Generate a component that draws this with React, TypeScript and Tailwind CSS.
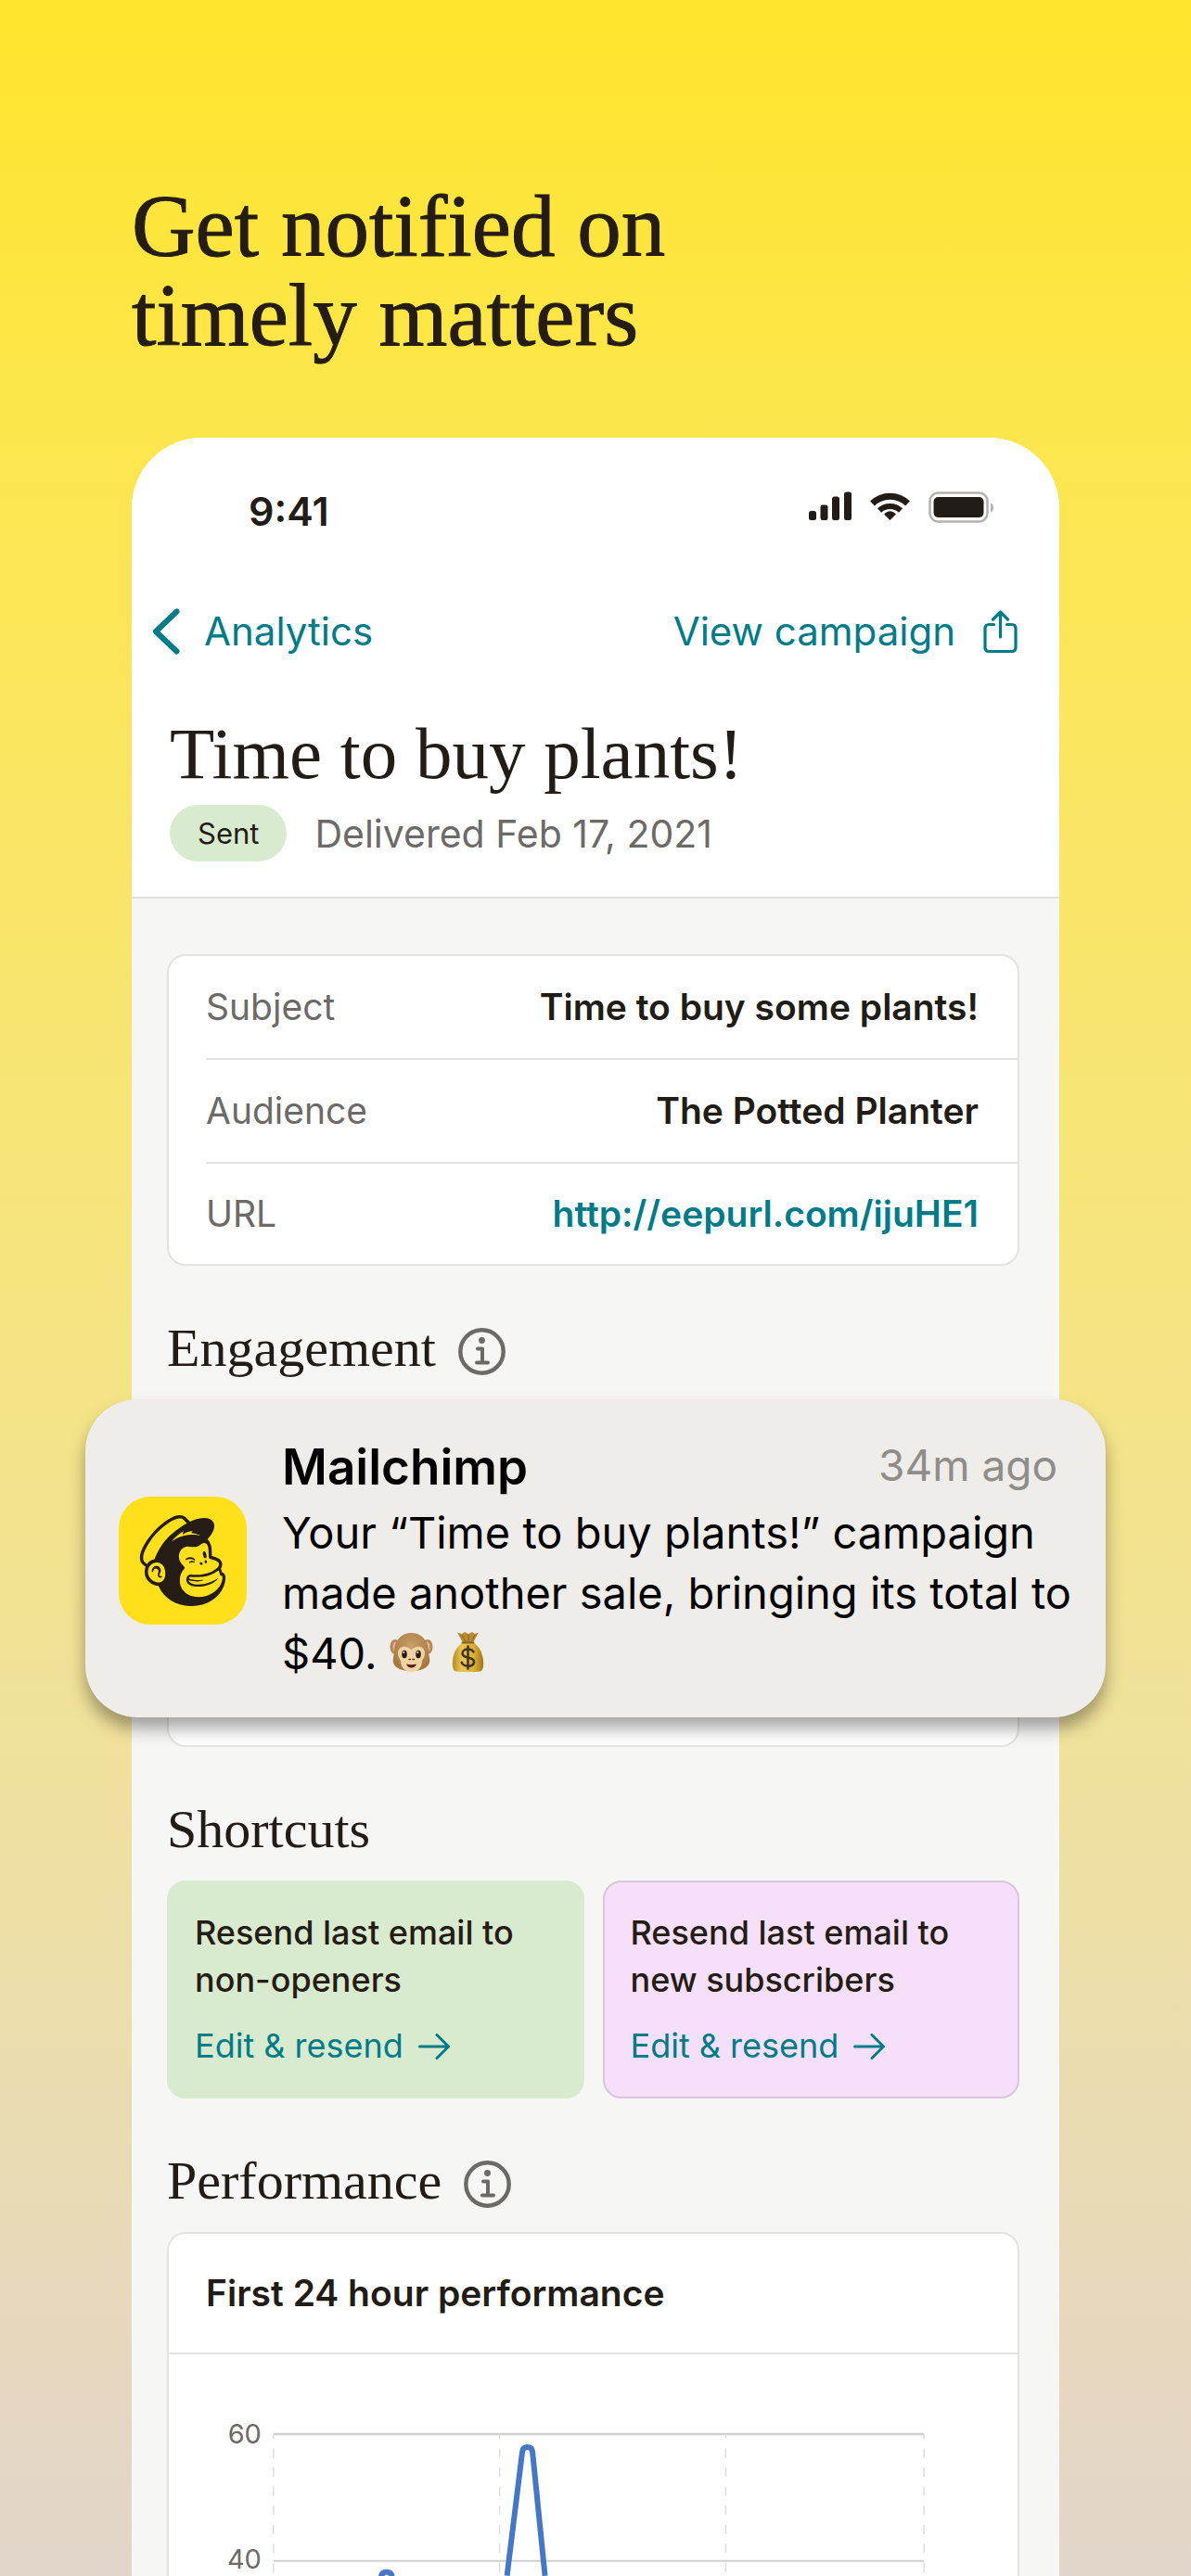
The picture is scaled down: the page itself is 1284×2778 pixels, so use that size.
import type { ReactNode } from 'react';
import { SiMailchimp } from 'react-icons/si';

const details = [
  { label: 'Subject', value: 'Time to buy some plants!' },
  { label: 'Audience', value: 'The Potted Planter' },
  { label: 'URL', value: 'http://eepurl.com/ijuHE1', href: '#url' },
];

const shortcuts = [
  { id: 'non-openers', title: 'Resend last email to non-openers', color: 'bg-[#d9ebcf] border-[#d9ebcf]' },
  { id: 'new-subscribers', title: 'Resend last email to new subscribers', color: 'bg-[#f6e0f9] border-[#d9c5dc]' },
];

function StatusIcons() {
  return (
    <svg width="200" height="40" viewBox="0 0 200 40" aria-hidden="true">
      <g fill="#211c15">
        <rect x="0" y="24" width="8" height="10" rx="2.5" />
        <rect x="12.5" y="17.5" width="8" height="16.5" rx="2.5" />
        <rect x="25" y="8.5" width="8" height="25.5" rx="2.5" />
        <rect x="38" y="3.5" width="8" height="30.5" rx="2.5" />
        <path d="M87.5 34 81 27.5Q87.5 21 94 27.5Z" />
        <rect x="134.5" y="9" width="54" height="22" rx="5" />
      </g>
      <g fill="none" stroke="#211c15">
        <path d="M68.5 16A27 27 0 0 1 106.5 16" strokeWidth="7" />
        <path d="M76 23.5A17 17 0 0 1 99 23.500" strokeWidth="6" />
      </g>
      <rect x="130.5" y="4.5" width="62" height="31" rx="9" fill="none" stroke="#b3b0ad" strokeWidth="2.5" />
      <path d="M196 15.5q3 1.5 3 5t-3 5z" fill="#b3b0ad" />
    </svg>
  );
}

function ChevronIcon() {
  return (
    <svg width="30" height="50" viewBox="0 0 30 50" fill="none" stroke="#007c89" strokeWidth="6" strokeLinecap="round" strokeLinejoin="round" aria-hidden="true">
      <path d="M26.5 3.5 4 25l22.5 21.5" />
    </svg>
  );
}

function ShareIcon() {
  return (
    <svg width="37" height="46" viewBox="0 0 37 46" fill="none" stroke="#007c89" strokeWidth="3.2" strokeLinecap="round" strokeLinejoin="round" aria-hidden="true">
      <path d="M11.5 15.500H6a4 4 0 0 0-4 4V40.500a4 4 0 0 0 4 4H31a4 4 0 0 0 4-4V19.500a4 4 0 0 0-4-4H25.500" />
      <path d="M18.5 29V2.500M10.500 10l8-8 8 8" />
    </svg>
  );
}

function InfoIcon() {
  return (
    <svg width="51" height="53" viewBox="0 0 51 53" fill="none" stroke="#6b6a67" aria-hidden="true">
      <circle cx="25.5" cy="25.5" r="23.2" strokeWidth="4.4" />
      <path d="M21 22.5h5v15M20 37.500h12" strokeWidth="4" strokeLinecap="round" strokeLinejoin="round" />
      <circle cx="25.5" cy="13.5" r="3.4" fill="#6b6a67" stroke="none" />
    </svg>
  );
}

function ArrowIcon() {
  return (
    <svg width="34" height="28" viewBox="0 0 34 28" fill="none" stroke="#007c89" strokeWidth="3" strokeLinecap="round" strokeLinejoin="round" aria-hidden="true">
      <path d="M1.5 14h31M20 1.500 32.500 14 20 26.500" />
    </svg>
  );
}

function MonkeyEmoji() {
  return (
    <svg className="inline-block align-[-4px]" width="47" height="44" viewBox="0 0 47 44" role="img" aria-label="monkey face">
      <defs>
        <radialGradient id="fur" cx="0.5" cy="0.35" r="0.65">
          <stop offset="0" stopColor="#c9a169" />
          <stop offset="1" stopColor="#a5763d" />
        </radialGradient>
      </defs>
      <ellipse cx="6" cy="16" rx="5.5" ry="8" fill="#b48a55" />
      <ellipse cx="41" cy="16" rx="5.5" ry="8" fill="#b48a55" />
      <ellipse cx="6.5" cy="16" rx="3" ry="5.5" fill="#efa9a0" />
      <ellipse cx="40.5" cy="16" rx="3" ry="5.5" fill="#efa9a0" />
      <path d="M23.5 1C34 1 42 9 42 21c0 4 2 8 1 12-2 6-9 9-19.500 9S6 39 4 33c-1-4 1-8 1-12C5 9 13 1 23.500 1Z" fill="url(#fur)" />
      <path d="M23.5 19C19 14 9 14 9 23c0 4 2 6 3 8 0 8 5 12 11.500 12S35 39 35 31c1-2 3-4 3-8 0-9-10-9-14.500-4Z" fill="#f0d2a4" />
      <ellipse cx="16" cy="24" rx="2.8" ry="4.3" fill="#2a1a10" />
      <ellipse cx="31" cy="24" rx="2.8" ry="4.3" fill="#2a1a10" />
      <circle cx="15.3" cy="22" r="1" fill="#fff" />
      <circle cx="30.3" cy="22" r="1" fill="#fff" />
      <path d="M21 29.5h1.500M25 29.500h1.500" stroke="#5b3a1c" strokeWidth="1.5" strokeLinecap="round" />
      <path d="M18 34.5q5.500 1.500 11 0-1.500 4-5.500 4t-5.500-4Z" fill="#571a14" />
    </svg>
  );
}

function MoneyBagEmoji() {
  return (
    <svg className="ml-5 inline-block align-[-4px]" width="35" height="45" viewBox="0 0 35 45" role="img" aria-label="money bag">
      <defs>
        <linearGradient id="bag" x1="0" y1="0" x2="1" y2="0">
          <stop offset="0" stopColor="#b8891f" />
          <stop offset="0.3" stopColor="#e9c653" />
          <stop offset="0.7" stopColor="#d9ae35" />
          <stop offset="1" stopColor="#a27518" />
        </linearGradient>
      </defs>
      <path d="M6 1.5 11 3l3-2 4 2 4-2 3 2 4-1.500-6 11H12Z" fill="#b88a33" />
      <path d="M11 4l4 8M18 4v8M25 4l-4 8" stroke="#8d6420" strokeWidth="1" />
      <path d="M12 12h11c7 5 10 11 11 20 .5 5 0 9-2 11-4 1.500-25 1.500-29 0-2-2-2.500-6-2-11 1-9 4-15 11-20Z" fill="url(#bag)" />
      <path d="M11.5 12.500h12" stroke="#8d6420" strokeWidth="2" strokeLinecap="round" />
      <path d="M23.5 22.500c-1-2-3-3-6-3-3.500 0-6 1.700-6 4.500 0 6.500 12.500 3 12.500 9 0 3-2.500 4.700-6.300 4.700-3.400 0-6-1.200-7-4M17.500 16.500v24" fill="none" stroke="#41341c" strokeWidth="2.5" strokeLinecap="round" />
    </svg>
  );
}

function SectionHeading({ children, info }: { children: ReactNode; info?: boolean }) {
  return (
    <div className="mt-14 mb-6 flex h-16 items-end gap-6">
      <h3 className="font-['Liberation_Serif',serif] text-[58px] leading-[62px] text-[#211c15]">{children}</h3>
      {info && (
        <button aria-label={`About ${children}`}>
          <InfoIcon />
        </button>
      )}
    </div>
  );
}

function Notification() {
  return (
    <div
      role="alert"
      className="absolute top-0 right-[-93px] bottom-8 left-[-88px] flex items-center gap-[38px] rounded-[56px] bg-[#eeede9] pt-1 pr-7 pl-9 shadow-[0_12px_18px_rgba(0,0,0,0.35)]"
    >
      <div className="flex h-[138px] w-[138px] shrink-0 items-center justify-center rounded-[34px] bg-[#ffe01b]">
        <SiMailchimp className="h-[98px] w-[98px] text-[#241c15]" />
      </div>
      <div className="min-w-0 flex-1">
        <div className="flex justify-between pr-6">
          <h4 className="text-[53px] leading-[64px] font-semibold text-black">Mailchimp</h4>
          <span className="text-[46px] leading-[60px] text-[#8e8d8a]">34m ago</span>
        </div>
        <p className="mt-1.5 text-[47px] leading-[65px] text-black">
          Your “Time to buy plants!” campaign made another sale, bringing its total to $40. <MonkeyEmoji />
          <MoneyBagEmoji />
        </p>
      </div>
    </div>
  );
}

function PerformanceChart() {
  return (
    <svg className="block w-full" viewBox="0 0 916 239" role="img" aria-label="First 24 hour performance">
      <g stroke="#cfcfcd" strokeWidth="2">
        <path d="M113 86H815" strokeWidth="2.5" />
        <path d="M113 223H815" />
      </g>
      <g stroke="#dededc" strokeWidth="1.5" strokeDasharray="10 10.6" strokeDashoffset="5">
        <path d="M113 86V239M357 86V239M601 86V239M815 86V239" />
      </g>
      <g className="font-['Inter',sans-serif] text-[29px]" fill="#6b6a67" textAnchor="end">
        <text x="100" y="96">60</text>
        <text x="100" y="231">40</text>
      </g>
      <g fill="none" stroke="#4577c9" strokeWidth="6" strokeLinejoin="round">
        <path d="M365 239 381.5 105Q382 100 387 100T392.5 105L406 239" />
        <path d="M229 242Q229 235 235 235T241 242" />
      </g>
    </svg>
  );
}

export default function App() {
  return (
    <main className="flex min-h-screen flex-col bg-[linear-gradient(180deg,#ffe52c_0%,#fde64d_17%,#f4e488_55%,#efe0a0_70%,#e2d5cb_100%)] px-[142px] pt-[196px] font-['Inter',sans-serif]">
      <h1 className="font-['Liberation_Serif',serif] text-[95px] leading-[96px] text-[#241c15] [-webkit-text-stroke:1px_#241c15]">
        Get notified on
        <br />
        timely matters
      </h1>

      <div className="mt-[84px] flex flex-1 flex-col rounded-t-[76px] bg-[#f6f6f4]">
        {/* Header */}
        <header className="rounded-t-[76px] border-b-2 border-[#e0e0de] bg-white pt-[55px] pb-[38px]">
          <div className="flex items-start justify-between pr-[70px] pl-[126px]">
            <span className="text-[43px] leading-[48px] font-semibold text-[#211c15]">9:41</span>
            <StatusIcons />
          </div>

          <nav className="mt-20 flex items-center justify-between pr-[45px] pl-[22px] text-[42px] leading-[52px] text-[#007c89]">
            <a href="#analytics" className="flex items-center gap-[26px]">
              <ChevronIcon />
              Analytics
            </a>
            <div className="flex items-center gap-[30px]">
              <a href="#campaign">View campaign</a>
              <button aria-label="Share">
                <ShareIcon />
              </button>
            </div>
          </nav>

          <div className="mt-[62px] px-[41px]">
            <h2 className="font-['Liberation_Serif',serif] text-[79px] leading-[88px] text-[#211c15]">Time to buy plants!</h2>
            <div className="mt-[11px] flex items-center gap-[30px]">
              <span className="rounded-full bg-[#d9ebcf] px-[30px] text-[31px] leading-[61px] text-[#211c15]">Sent</span>
              <span className="text-[41px] leading-[52px] text-[#6b6a67]">Delivered Feb 17, 2021</span>
            </div>
          </div>
        </header>

        {/* Body */}
        <div className="flex flex-1 flex-col pt-[60px] pr-[43px] pl-[38px]">
          <dl className="rounded-[20px] border-2 border-[#e3e3e1] bg-white pl-10 text-[39px]">
            {details.map((row) => (
              <div
                key={row.label}
                className="flex h-28 items-center justify-between border-b-2 border-[#e3e3e1] pr-[42px] last:h-[108px] last:border-b-0"
              >
                <dt className="text-[#6b6a67]">{row.label}</dt>
                <dd className="font-semibold text-[#211c15]">
                  {row.href ? (
                    <a href={row.href} className="text-[#007c89]">
                      {row.value}
                    </a>
                  ) : (
                    row.value
                  )}
                </dd>
              </div>
            ))}
          </dl>

          <SectionHeading info>Engagement</SectionHeading>
          <div className="relative pt-2">
            <div className="h-[367px] rounded-[20px] border-2 border-[#e3e3e1] bg-white" />
            <Notification />
          </div>

          <SectionHeading>Shortcuts</SectionHeading>
          <div className="grid grid-cols-2 gap-5">
            {shortcuts.map((item) => (
              <div key={item.id} className={`rounded-[20px] border-2 px-7 py-[29px] text-[36px] leading-[51px] ${item.color}`}>
                <p className="pr-10 font-medium text-[#241c15]">{item.title}</p>
                <a href={`#${item.id}`} className="mt-5 flex items-center gap-4 text-[#007c89]">
                  Edit & resend
                  <ArrowIcon />
                </a>
              </div>
            ))}
          </div>

          <SectionHeading info>Performance</SectionHeading>
          <section className="flex-1 rounded-t-[20px] border-2 border-b-0 border-[#e3e3e1] bg-white">
            <h4 className="border-b-2 border-[#e3e3e1] px-10 text-[39px] leading-[128px] font-semibold text-[#211c15]">
              First 24 hour performance
            </h4>
            <PerformanceChart />
          </section>
        </div>
      </div>
    </main>
  );
}
